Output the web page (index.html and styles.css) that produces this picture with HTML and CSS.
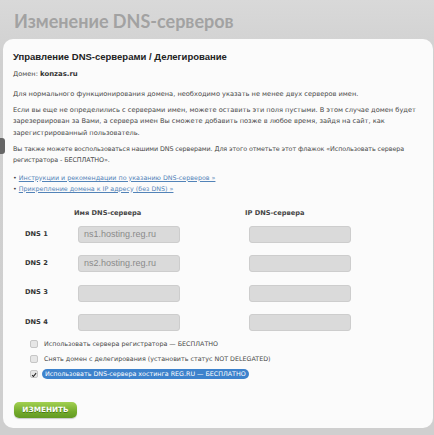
FILE: index.html
```html
<!DOCTYPE html>
<html lang="ru">

<head>
    <meta charset="UTF-8">
    <meta name="viewport" content="width=device-width, initial-scale=1.0">
    <title>Изменение DNS-серверов</title>
    <link rel="stylesheet" href="styles.css">
</head>

<body>
    <h1 class="page-title">Изменение DNS-серверов</h1>
    <span class="side-tab"></span>

    <div class="card">
        <h2 class="card-title">Управление DNS-серверами / Делегирование</h2>
        <p class="domain">Домен: <b>konzas.ru</b></p>

        <p>Для нормального функционирования домена, необходимо указать не менее двух серверов имен.</p>
        <p>Если вы еще не определились с серверами имен, можете оставить эти поля пустыми. В этом случае домен будет
            зарезервирован за Вами, а сервера имен Вы сможете добавить позже в любое время, зайдя на сайт, как
            зарегистрированный пользователь.</p>
        <p class="tight">Вы также можете воспользоваться нашими DNS серверами. Для этого отметьте этот флажок «Использовать сервера<br>
            регистратора - БЕСПЛАТНО».</p>

        <ul class="links">
            <li><a href="#">Инструкции и рекомендации по указанию DNS-серверов »</a></li>
            <li><a href="#">Прикрепление домена к IP адресу (без DNS) »</a></li>
        </ul>

        <!-- таблица серверов -->
        <div class="dns-head">
            <span></span>
            <span class="col-head">Имя DNS-сервера</span>
            <span class="col-head">IP DNS-сервера</span>
        </div>
        <div class="dns-form">
            <span class="dns-label">DNS 1</span>
            <span class="field">ns1.hosting.reg.ru</span>
            <span class="field"></span>

            <span class="dns-label">DNS 2</span>
            <span class="field">ns2.hosting.reg.ru</span>
            <span class="field"></span>

            <span class="dns-label">DNS 3</span>
            <span class="field"></span>
            <span class="field"></span>

            <span class="dns-label">DNS 4</span>
            <span class="field"></span>
            <span class="field"></span>
        </div>

        <div class="options">
            <label class="option"><span class="box"></span>Использовать сервера регистратора — БЕСПЛАТНО</label>
            <label class="option"><span class="box"></span>Снять домен с делегирования (установить статус NOT DELEGATED)</label>
            <label class="option checked">
                <span class="box"><svg width="8" height="8" viewBox="0 0 8 8"><path d="M1.5 4.2 L3.2 6 L6.8 1.6" fill="none" stroke="#222" stroke-width="1.4"/></svg></span>
                <span class="selected">Использовать DNS-сервера хостинга REG.RU — БЕСПЛАТНО</span>
            </label>
        </div>

        <button class="btn">ИЗМЕНИТЬ</button>
    </div>
</body>

</html>
```

FILE: styles.css
```css
* {
    margin: 0;
    padding: 0;
    box-sizing: border-box;
}

body {
    width: 434px;
    height: 435px;
    overflow: hidden;
    position: relative;
    background: linear-gradient(#d9d9d9, #d0d0d0 60px, #cfcfcf);
    font-family: "DejaVu Sans", Verdana, sans-serif;
    color: #484848;
}

.page-title {
    padding: 7px 0 0 14px;
    height: 39px;
    font-family: Lato, "Open Sans", sans-serif;
    font-size: 18px;
    font-weight: bold;
    color: #a2a2a2;
    line-height: 28px;
}

.side-tab {
    position: absolute;
    left: 0;
    top: 138px;
    width: 5px;
    height: 16px;
    background-color: #666;
    border-radius: 0 3px 3px 0;
}

.card {
    margin-left: 3px;
    width: 430px;
    height: 389px;
    padding: 11px 6px 0 10px;
    background-color: #fbfbfb;
    border-radius: 10px;
    font-size: 6.65px;
    line-height: 11.5px;
}

.card-title {
    font-family: "Liberation Sans", Arial, sans-serif;
    font-size: 9.5px;
    font-weight: bold;
    color: #222;
    line-height: 14px;
    margin-bottom: 5px;
}

.card p {
    margin-bottom: 4.5px;
}

.card .domain {
    margin-bottom: 8px;
}

.card .tight {
    font-size: 6.4px;
    letter-spacing: -0.1px;
    margin-top: 2px;
}

.domain b {
    font-size: 6.9px;
    color: #333;
}

.links {
    list-style: none;
    font-size: 6.35px;
    line-height: 11px;
    margin: 5px 0 14px;
}

.links li::before {
    content: "•";
    color: #444;
    margin-right: 2px;
}

.links a {
    color: #5283b8;
}

.dns-head,
.dns-form {
    display: grid;
    grid-template-columns: 53px 171px 102px;
    margin-left: 12px;
}

.dns-head {
    line-height: 11px;
    margin-bottom: 7.5px;
}

.dns-form {
    grid-auto-rows: 17px;
    row-gap: 12.3px;
    align-items: center;
}

.col-head {
    font-weight: bold;
    color: #444;
    margin-left: -4px;
}

.dns-label {
    font-weight: bold;
    color: #333;
}

.field {
    width: 102px;
    height: 17px;
    background-color: #dadada;
    border: 1px solid #cdcdcd;
    border-radius: 3px;
    font-family: "Liberation Sans", Arial, sans-serif;
    font-size: 9px;
    line-height: 15px;
    padding-left: 5px;
    color: #8a8a8a;
}

.options {
    margin: 5.6px 0 0 17px;
    font-size: 6.35px;
}

.option {
    display: flex;
    align-items: center;
    height: 15px;
}

.box {
    width: 8px;
    height: 8px;
    border: 1px solid #c6c6c6;
    background-color: #e6e6e6;
    border-radius: 2px;
    margin-right: 6px;
    display: flex;
}

.checked .box {
    margin-right: 4px;
}

.selected {
    background-color: #3d82cc;
    color: #fff;
    border-radius: 5px;
    padding: 0 3px;
    line-height: 10px;
}

.btn {
    display: block;
    margin: 20.5px 0 0 1px;
    width: 63px;
    height: 16px;
    border: none;
    border-radius: 5px;
    background: linear-gradient(#a3d152, #74ab2c 60%, #629a22);
    color: #fff;
    font-family: "DejaVu Sans", Verdana, sans-serif;
    font-size: 7.3px;
    font-weight: bold;
    text-shadow: 0 1px 0 #4a7a18;
    box-shadow: 0 1px 1px rgba(0, 0, 0, 0.2);
}
```
